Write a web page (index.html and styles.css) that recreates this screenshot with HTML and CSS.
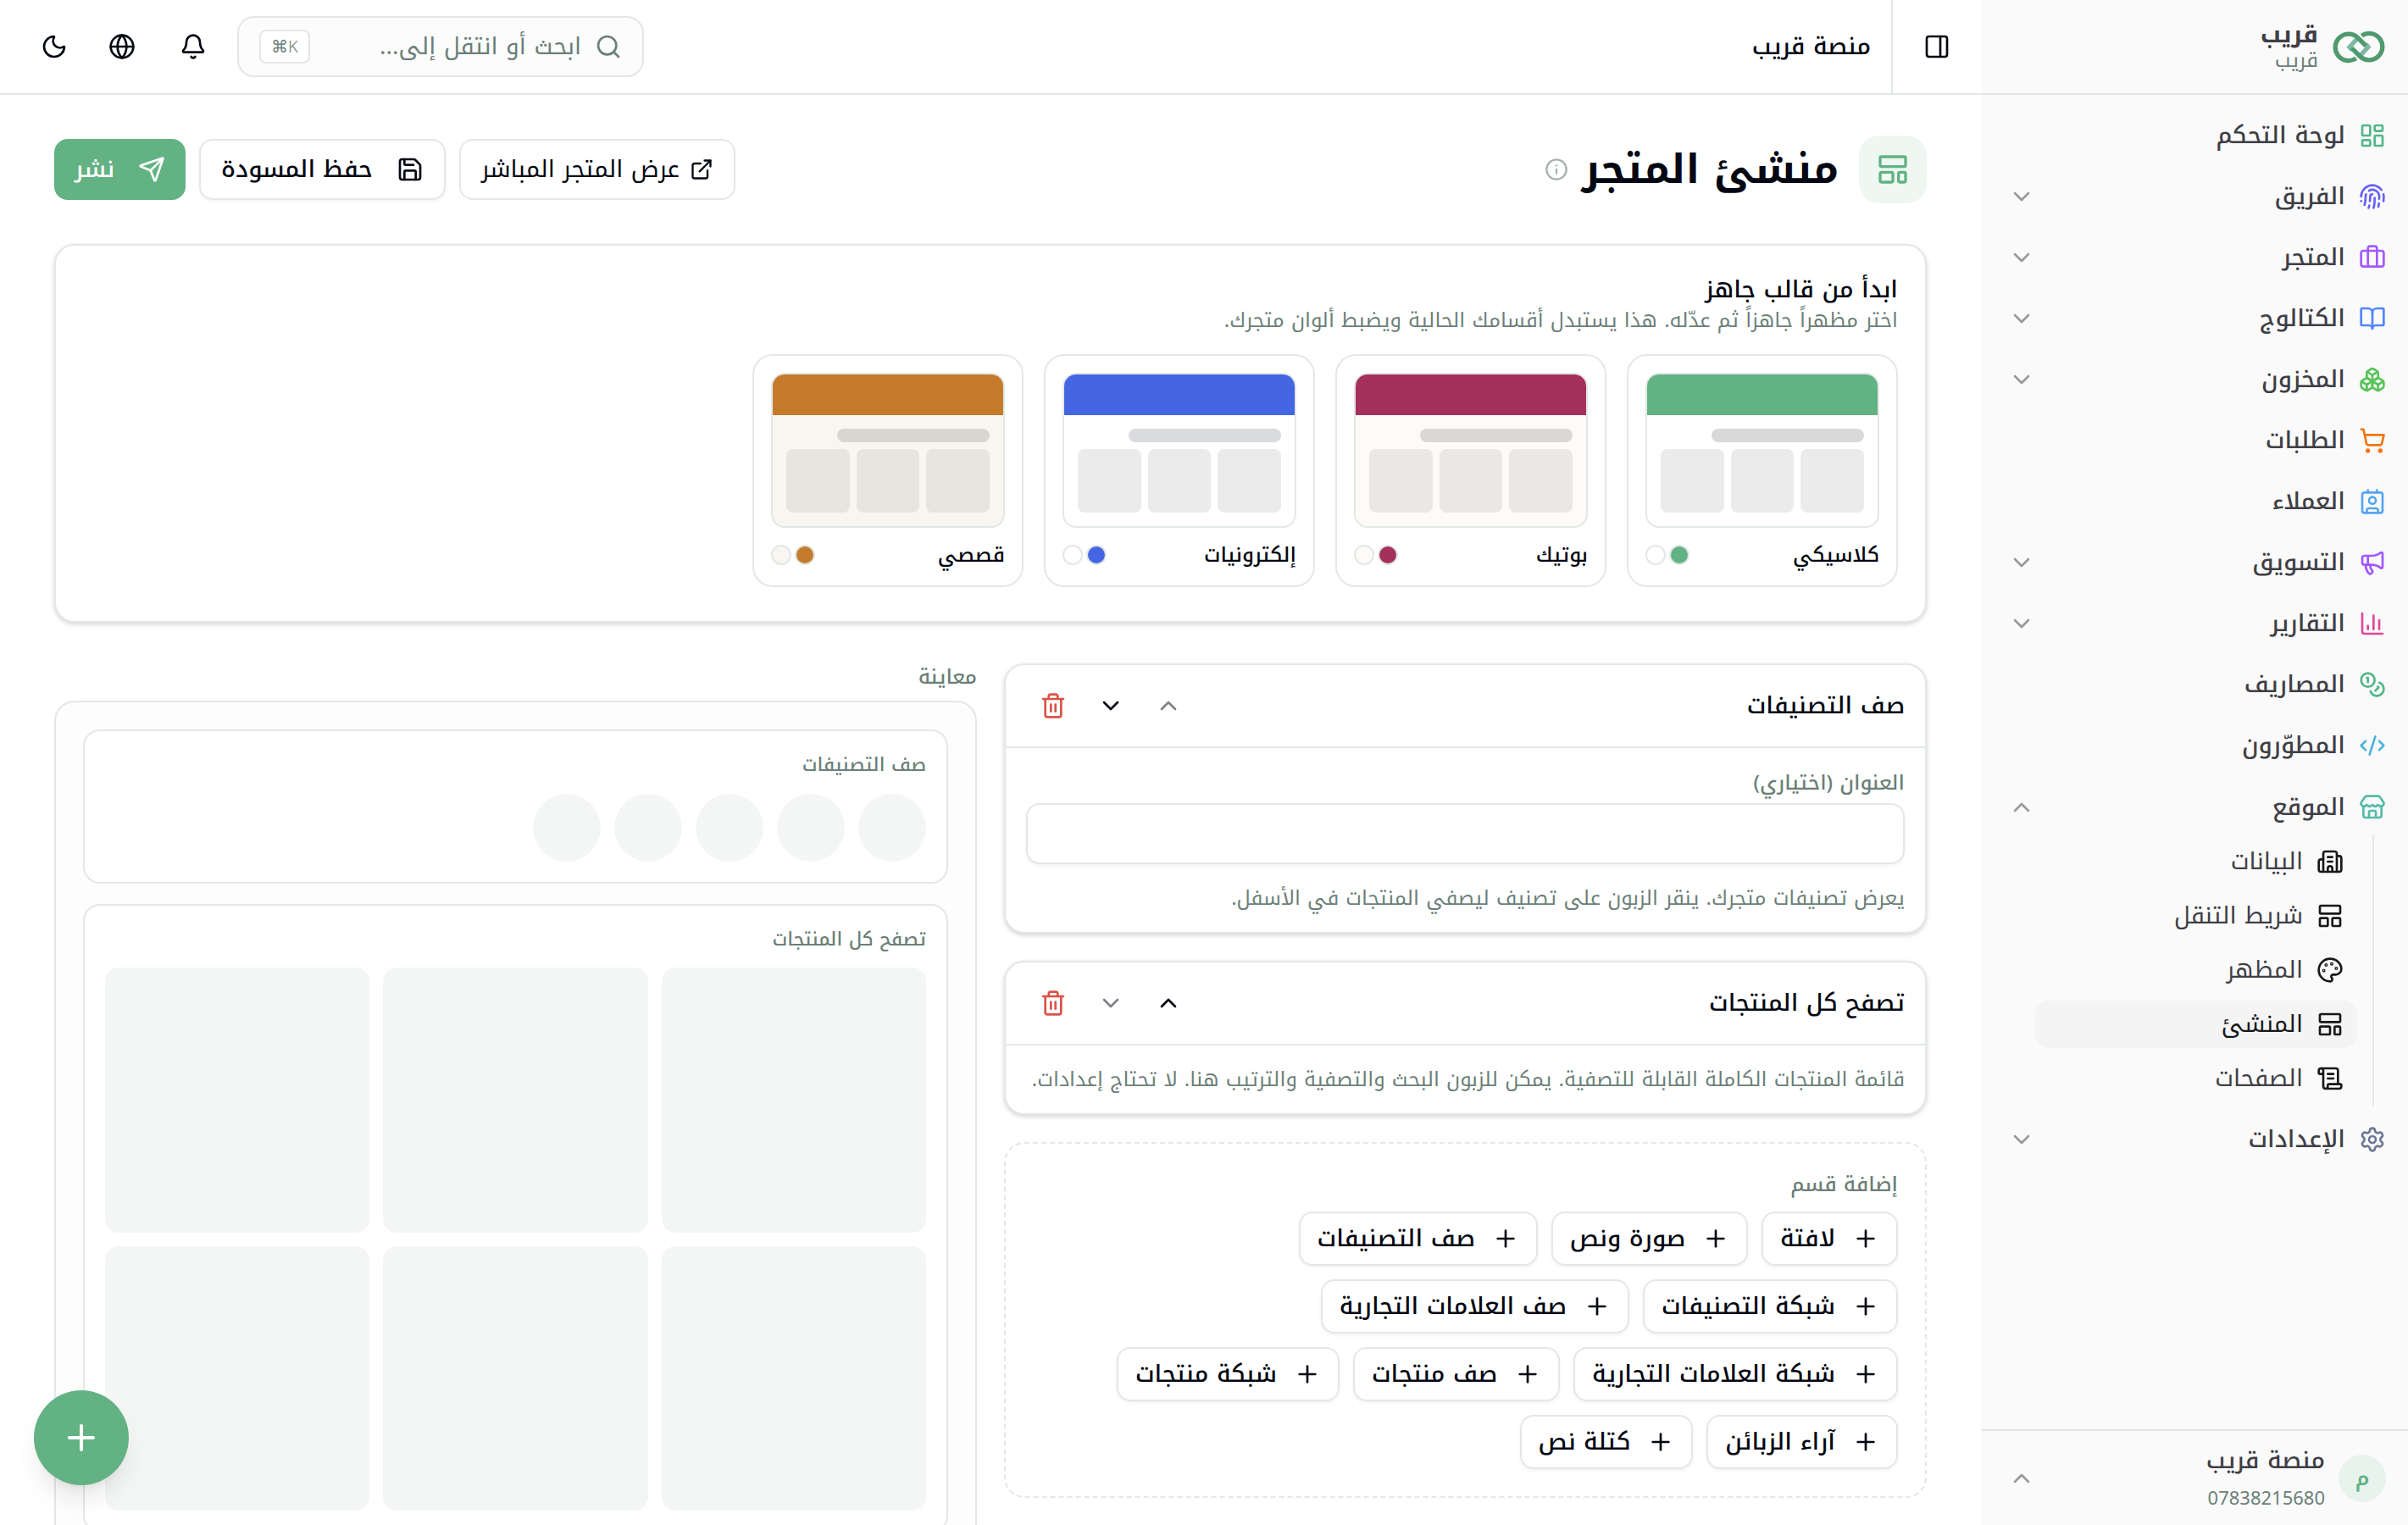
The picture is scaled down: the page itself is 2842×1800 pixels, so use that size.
FILE: index.html
```html
<!DOCTYPE html>
<html lang="ar" dir="rtl">
<head>
    <meta charset="UTF-8">
    <meta name="viewport" content="width=device-width, initial-scale=1.0">
    <title>منشئ المتجر - منصة قريب</title>
    <link rel="stylesheet" href="styles.css">
</head>
<body>

<!-- Icon sprite -->
<svg class="sprite" aria-hidden="true">
    <symbol id="i-dashboard" viewBox="0 0 24 24"><rect width="7" height="9" x="3" y="3" rx="1"/><rect width="7" height="5" x="14" y="3" rx="1"/><rect width="7" height="9" x="14" y="12" rx="1"/><rect width="7" height="5" x="3" y="16" rx="1"/></symbol>
    <symbol id="i-finger" viewBox="0 0 24 24"><path d="M12 10a2 2 0 0 0-2 2c0 1.02-.1 2.51-.26 4"/><path d="M14 13.12c0 2.38 0 6.38-1 8.88"/><path d="M17.29 21.02c.12-.6.43-2.3.5-3.02"/><path d="M2 12a10 10 0 0 1 18-6"/><path d="M2 16h.01"/><path d="M21.8 16c.2-2 .131-5.354 0-6"/><path d="M5 19.5C5.5 18 6 15 6 12a6 6 0 0 1 .34-2"/><path d="M8.65 22c.21-.66.45-1.32.57-2"/><path d="M9 6.8a6 6 0 0 1 9 5.2v2"/></symbol>
    <symbol id="i-case" viewBox="0 0 24 24"><path d="M16 20V4a2 2 0 0 0-2-2h-4a2 2 0 0 0-2 2v16"/><rect width="20" height="14" x="2" y="6" rx="2"/></symbol>
    <symbol id="i-book" viewBox="0 0 24 24"><path d="M12 7v14"/><path d="M3 18a1 1 0 0 1-1-1V4a1 1 0 0 1 1-1h5a4 4 0 0 1 4 4 4 4 0 0 1 4-4h5a1 1 0 0 1 1 1v13a1 1 0 0 1-1 1h-6a3 3 0 0 0-3 3 3 3 0 0 0-3-3z"/></symbol>
    <symbol id="i-boxes" viewBox="0 0 24 24"><path d="M2.97 12.92A2 2 0 0 0 2 14.63v3.24a2 2 0 0 0 .97 1.71l3 1.8a2 2 0 0 0 2.06 0L12 19v-5.5l-5-3-4.03 2.42Z"/><path d="m7 16.5-4.74-2.85"/><path d="m7 16.5 5-3"/><path d="M7 16.5v5.17"/><path d="M12 13.5V19l3.97 2.38a2 2 0 0 0 2.06 0l3-1.8a2 2 0 0 0 .97-1.71v-3.24a2 2 0 0 0-.97-1.71L17 10.5l-5 3Z"/><path d="m17 16.5-5-3"/><path d="m17 16.5 4.74-2.85"/><path d="M17 16.5v5.17"/><path d="M7.97 4.42A2 2 0 0 0 7 6.13v4.37l5 3 5-3V6.13a2 2 0 0 0-.97-1.71l-3-1.8a2 2 0 0 0-2.06 0l-3 1.8Z"/><path d="M12 8 7.26 5.15"/><path d="m12 8 4.74-2.85"/><path d="M12 13.5V8"/></symbol>
    <symbol id="i-cart" viewBox="0 0 24 24"><circle cx="8" cy="21" r="1"/><circle cx="19" cy="21" r="1"/><path d="M2.05 2.05h2l2.66 12.42a2 2 0 0 0 2 1.58h9.78a2 2 0 0 0 1.95-1.57l1.65-7.43H5.12"/></symbol>
    <symbol id="i-contact" viewBox="0 0 24 24"><path d="M16 2v2"/><path d="M7 22v-2a2 2 0 0 1 2-2h6a2 2 0 0 1 2 2v2"/><path d="M8 2v2"/><circle cx="12" cy="11" r="3"/><rect x="3" y="4" width="18" height="18" rx="2"/></symbol>
    <symbol id="i-megaphone" viewBox="0 0 24 24"><path d="M11 6a13 13 0 0 0 8.4-2.8A1 1 0 0 1 21 4v12a1 1 0 0 1-1.6.8A13 13 0 0 0 11 14H5a2 2 0 0 1-2-2V8a2 2 0 0 1 2-2z"/><path d="M6 14a12 12 0 0 0 2.4 7.2 2 2 0 0 0 3.2-2.4A8 8 0 0 1 10 14"/><path d="M8 6v8"/></symbol>
    <symbol id="i-chart" viewBox="0 0 24 24"><path d="M3 3v16a2 2 0 0 0 2 2h16"/><path d="M18 17V9"/><path d="M13 17V5"/><path d="M8 17v-3"/></symbol>
    <symbol id="i-coins" viewBox="0 0 24 24"><circle cx="8" cy="8" r="6"/><path d="M18.09 10.37A6 6 0 1 1 10.34 18"/><path d="M7 6h1v4"/><path d="m16.71 13.88.7.71-2.82 2.82"/></symbol>
    <symbol id="i-code" viewBox="0 0 24 24"><path d="m18 16 4-4-4-4"/><path d="m6 8-4 4 4 4"/><path d="m14.5 4-5 16"/></symbol>
    <symbol id="i-store" viewBox="0 0 24 24"><path d="M15 21v-5a1 1 0 0 0-1-1h-4a1 1 0 0 0-1 1v5"/><path d="M17.774 10.31a1.12 1.12 0 0 0-1.549 0 2.5 2.5 0 0 1-3.451 0 1.12 1.12 0 0 0-1.548 0 2.5 2.5 0 0 1-3.452 0 1.12 1.12 0 0 0-1.549 0 2.5 2.5 0 0 1-3.77-3.248l2.889-4.184A2 2 0 0 1 7 2h10a2 2 0 0 1 1.653.873l2.895 4.192a2.5 2.5 0 0 1-3.774 3.244"/><path d="M4 10.95V19a2 2 0 0 0 2 2h12a2 2 0 0 0 2-2v-8.05"/></symbol>
    <symbol id="i-building" viewBox="0 0 24 24"><path d="M10 12h4"/><path d="M10 8h4"/><path d="M14 21v-3a2 2 0 0 0-4 0v3"/><path d="M6 10H4a2 2 0 0 0-2 2v7a2 2 0 0 0 2 2h16a2 2 0 0 0 2-2V9a2 2 0 0 0-2-2h-2"/><path d="M6 21V5a2 2 0 0 1 2-2h8a2 2 0 0 1 2 2v16"/></symbol>
    <symbol id="i-panel-top" viewBox="0 0 24 24"><rect width="18" height="7" x="3" y="3" rx="1"/><rect width="7" height="7" x="3" y="14" rx="1"/><rect width="7" height="7" x="14" y="14" rx="1"/></symbol>
    <symbol id="i-template" viewBox="0 0 24 24"><rect width="18" height="7" x="3" y="3" rx="1"/><rect width="9" height="7" x="3" y="14" rx="1"/><rect width="5" height="7" x="16" y="14" rx="1"/></symbol>
    <symbol id="i-palette" viewBox="0 0 24 24"><path d="M12 22a1 1 0 0 1 0-20 10 9 0 0 1 10 9 5 5 0 0 1-5 5h-2.25a1.75 1.75 0 0 0-1.4 2.8l.3.4a1.75 1.75 0 0 1-1.4 2.8z"/><circle cx="13.5" cy="6.5" r=".5"/><circle cx="17.5" cy="10.5" r=".5"/><circle cx="6.5" cy="12.5" r=".5"/><circle cx="8.5" cy="7.5" r=".5"/></symbol>
    <symbol id="i-scroll" viewBox="0 0 24 24"><path d="M15 12h-5"/><path d="M15 8h-5"/><path d="M19 17V5a2 2 0 0 0-2-2H4"/><path d="M8 21h12a2 2 0 0 0 2-2v-1a1 1 0 0 0-1-1H11a1 1 0 0 0-1 1v1a2 2 0 1 1-4 0V5a2 2 0 1 0-4 0v2a1 1 0 0 0 1 1h3"/></symbol>
    <symbol id="i-settings" viewBox="0 0 24 24"><path d="M9.671 4.136a2.34 2.34 0 0 1 4.659 0 2.34 2.34 0 0 0 3.319 1.915 2.34 2.34 0 0 1 2.33 4.033 2.34 2.34 0 0 0 0 3.831 2.34 2.34 0 0 1-2.33 4.033 2.34 2.34 0 0 0-3.319 1.915 2.34 2.34 0 0 1-4.659 0 2.34 2.34 0 0 0-3.32-1.915 2.34 2.34 0 0 1-2.33-4.033 2.34 2.34 0 0 0 0-3.831A2.34 2.34 0 0 1 6.35 6.051a2.34 2.34 0 0 0 3.319-1.915"/><circle cx="12" cy="12" r="3"/></symbol>
    <symbol id="i-down" viewBox="0 0 24 24"><path d="m6 9 6 6 6-6"/></symbol>
    <symbol id="i-up" viewBox="0 0 24 24"><path d="m18 15-6-6-6 6"/></symbol>
    <symbol id="i-panel" viewBox="0 0 24 24"><rect width="18" height="18" x="3" y="3" rx="2"/><path d="M15 3v18"/></symbol>
    <symbol id="i-search" viewBox="0 0 24 24"><path d="m21 21-4.34-4.34"/><circle cx="11" cy="11" r="8"/></symbol>
    <symbol id="i-bell" viewBox="0 0 24 24"><path d="M10.268 21a2 2 0 0 0 3.464 0"/><path d="M3.262 15.326A1 1 0 0 0 4 17h16a1 1 0 0 0 .74-1.673C19.41 13.956 18 12.499 18 8A6 6 0 0 0 6 8c0 4.499-1.411 5.956-2.738 7.326"/></symbol>
    <symbol id="i-globe" viewBox="0 0 24 24"><circle cx="12" cy="12" r="10"/><path d="M12 2a14.5 14.5 0 0 0 0 20 14.5 14.5 0 0 0 0-20"/><path d="M2 12h20"/></symbol>
    <symbol id="i-moon" viewBox="0 0 24 24"><path d="M20.985 12.486a9 9 0 1 1-9.473-9.472c.405-.022.617.46.402.803a6 6 0 0 0 8.268 8.268c.344-.215.825-.004.803.401"/></symbol>
    <symbol id="i-info" viewBox="0 0 24 24"><circle cx="12" cy="12" r="10"/><path d="M12 16v-4"/><path d="M12 8h.01"/></symbol>
    <symbol id="i-external" viewBox="0 0 24 24"><path d="M15 3h6v6"/><path d="M10 14 21 3"/><path d="M18 13v6a2 2 0 0 1-2 2H5a2 2 0 0 1-2-2V8a2 2 0 0 1 2-2h6"/></symbol>
    <symbol id="i-save" viewBox="0 0 24 24"><path d="M15.2 3a2 2 0 0 1 1.4.6l3.8 3.8a2 2 0 0 1 .6 1.4V19a2 2 0 0 1-2 2H5a2 2 0 0 1-2-2V5a2 2 0 0 1 2-2z"/><path d="M17 21v-7a1 1 0 0 0-1-1H8a1 1 0 0 0-1 1v7"/><path d="M7 3v4a1 1 0 0 0 1 1h7"/></symbol>
    <symbol id="i-send" viewBox="0 0 24 24"><path d="M14.536 21.686a.5.5 0 0 0 .937-.024l6.5-19a.496.496 0 0 0-.635-.635l-19 6.5a.5.5 0 0 0-.024.937l7.93 3.18a2 2 0 0 1 1.112 1.11z"/><path d="m21.854 2.147-10.94 10.939"/></symbol>
    <symbol id="i-trash" viewBox="0 0 24 24"><path d="M10 11v6"/><path d="M14 11v6"/><path d="M19 6v14a2 2 0 0 1-2 2H7a2 2 0 0 1-2-2V6"/><path d="M3 6h18"/><path d="M8 6V4a2 2 0 0 1 2-2h4a2 2 0 0 1 2 2v2"/></symbol>
    <symbol id="i-plus" viewBox="0 0 24 24"><path d="M5 12h14"/><path d="M12 5v14"/></symbol>
</svg>

<div class="app">

    <!-- Sidebar -->
    <aside class="sidebar">
        <div class="brand">
            <svg class="brand-logo" viewBox="0 0 186 116">
                <path class="logo-light" d="M117 47 126 58 101 85"/>
                <path class="logo-light" d="M69 69 60 58 85 31"/>
                <path class="logo-ring" d="M83 98A47 47 0 1 1 89 25L118 54"/>
                <path class="logo-ring" d="M103 18A47 47 0 1 1 97 91L68 62"/>
            </svg>
            <div class="brand-text">
                <strong>قريب</strong>
                <span>قريب</span>
            </div>
        </div>

        <nav class="nav">
            <a class="nav-item"><svg class="icon c-emerald"><use href="#i-dashboard"/></svg><span>لوحة التحكم</span></a>
            <a class="nav-item"><svg class="icon c-indigo"><use href="#i-finger"/></svg><span>الفريق</span><svg class="icon chevron"><use href="#i-down"/></svg></a>
            <a class="nav-item"><svg class="icon c-purple"><use href="#i-case"/></svg><span>المتجر</span><svg class="icon chevron"><use href="#i-down"/></svg></a>
            <a class="nav-item"><svg class="icon c-blue"><use href="#i-book"/></svg><span>الكتالوج</span><svg class="icon chevron"><use href="#i-down"/></svg></a>
            <a class="nav-item"><svg class="icon c-green"><use href="#i-boxes"/></svg><span>المخزون</span><svg class="icon chevron"><use href="#i-down"/></svg></a>
            <a class="nav-item"><svg class="icon c-orange"><use href="#i-cart"/></svg><span>الطلبات</span></a>
            <a class="nav-item"><svg class="icon c-sky"><use href="#i-contact"/></svg><span>العملاء</span></a>
            <a class="nav-item"><svg class="icon c-purple"><use href="#i-megaphone"/></svg><span>التسويق</span><svg class="icon chevron"><use href="#i-down"/></svg></a>
            <a class="nav-item"><svg class="icon c-pink"><use href="#i-chart"/></svg><span>التقارير</span><svg class="icon chevron"><use href="#i-down"/></svg></a>
            <a class="nav-item"><svg class="icon c-emerald"><use href="#i-coins"/></svg><span>المصاريف</span></a>
            <a class="nav-item"><svg class="icon c-cyan"><use href="#i-code"/></svg><span>المطوّرون</span></a>
            <div class="nav-group">
                <a class="nav-item"><svg class="icon c-teal"><use href="#i-store"/></svg><span>الموقع</span><svg class="icon chevron"><use href="#i-up"/></svg></a>
                <div class="subnav">
                    <a class="sub-item"><svg class="icon"><use href="#i-building"/></svg><span>البيانات</span></a>
                    <a class="sub-item"><svg class="icon"><use href="#i-panel-top"/></svg><span>شريط التنقل</span></a>
                    <a class="sub-item"><svg class="icon"><use href="#i-palette"/></svg><span>المظهر</span></a>
                    <a class="sub-item active"><svg class="icon"><use href="#i-template"/></svg><span>المنشئ</span></a>
                    <a class="sub-item"><svg class="icon"><use href="#i-scroll"/></svg><span>الصفحات</span></a>
                </div>
            </div>
            <a class="nav-item"><svg class="icon c-slate"><use href="#i-settings"/></svg><span>الإعدادات</span><svg class="icon chevron"><use href="#i-down"/></svg></a>
        </nav>

        <div class="account">
            <div class="avatar">م</div>
            <div class="account-text">
                <strong>منصة قريب</strong>
                <span>07838215680</span>
            </div>
            <svg class="icon chevron"><use href="#i-up"/></svg>
        </div>
    </aside>

    <!-- Main -->
    <div class="main">
        <header class="topbar">
            <div class="toggle"><svg class="icon"><use href="#i-panel"/></svg></div>
            <span class="topbar-title">منصة قريب</span>
            <div class="search">
                <svg class="icon"><use href="#i-search"/></svg>
                <span class="search-text">ابحث أو انتقل إلى...</span>
                <kbd dir="ltr">⌘K</kbd>
            </div>
            <div class="topbar-actions">
                <svg class="icon bell"><use href="#i-bell"/></svg>
                <svg class="icon"><use href="#i-globe"/></svg>
                <svg class="icon"><use href="#i-moon"/></svg>
            </div>
        </header>

        <div class="content">
            <div class="page-head">
                <div class="page-icon"><svg class="icon"><use href="#i-template"/></svg></div>
                <h1>منشئ المتجر</h1>
                <svg class="icon info"><use href="#i-info"/></svg>
                <div class="page-actions">
                    <a class="btn btn-view"><svg class="icon"><use href="#i-external"/></svg><span>عرض المتجر المباشر</span></a>
                    <a class="btn btn-save"><svg class="icon"><use href="#i-save"/></svg><span>حفظ المسودة</span></a>
                    <a class="btn btn-publish"><svg class="icon"><use href="#i-send"/></svg><span>نشر</span></a>
                </div>
            </div>

            <!-- Templates -->
            <section class="card templates">
                <h2>ابدأ من قالب جاهز</h2>
                <p>اختر مظهراً جاهزاً ثم عدّله. هذا يستبدل أقسامك الحالية ويضبط ألوان متجرك.</p>
                <div class="template-list">
                    <div class="template classic">
                        <div class="thumb">
                            <div class="thumb-head"></div>
                            <div class="thumb-body"><div class="thumb-bar"></div><div class="thumb-grid"><i></i><i></i><i></i></div></div>
                        </div>
                        <div class="template-foot"><span>كلاسيكي</span><i class="dot primary"></i><i class="dot surface"></i></div>
                    </div>
                    <div class="template boutique">
                        <div class="thumb">
                            <div class="thumb-head"></div>
                            <div class="thumb-body"><div class="thumb-bar"></div><div class="thumb-grid"><i></i><i></i><i></i></div></div>
                        </div>
                        <div class="template-foot"><span>بوتيك</span><i class="dot primary"></i><i class="dot surface"></i></div>
                    </div>
                    <div class="template electronics">
                        <div class="thumb">
                            <div class="thumb-head"></div>
                            <div class="thumb-body"><div class="thumb-bar"></div><div class="thumb-grid"><i></i><i></i><i></i></div></div>
                        </div>
                        <div class="template-foot"><span>إلكترونيات</span><i class="dot primary"></i><i class="dot surface"></i></div>
                    </div>
                    <div class="template story">
                        <div class="thumb">
                            <div class="thumb-head"></div>
                            <div class="thumb-body"><div class="thumb-bar"></div><div class="thumb-grid"><i></i><i></i><i></i></div></div>
                        </div>
                        <div class="template-foot"><span>قصصي</span><i class="dot primary"></i><i class="dot surface"></i></div>
                    </div>
                </div>
            </section>

            <div class="columns">
                <!-- Section editor -->
                <div class="editor">
                    <section class="card">
                        <div class="section-head">
                            <h3>صف التصنيفات</h3>
                            <span class="icon-btn disabled"><svg class="icon"><use href="#i-up"/></svg></span>
                            <span class="icon-btn"><svg class="icon"><use href="#i-down"/></svg></span>
                            <span class="icon-btn danger"><svg class="icon"><use href="#i-trash"/></svg></span>
                        </div>
                        <div class="section-body">
                            <label for="section-title">العنوان (اختياري)</label>
                            <input type="text" id="section-title">
                            <p>يعرض تصنيفات متجرك. ينقر الزبون على تصنيف ليصفي المنتجات في الأسفل.</p>
                        </div>
                    </section>
                    <section class="card">
                        <div class="section-head">
                            <h3>تصفح كل المنتجات</h3>
                            <span class="icon-btn"><svg class="icon"><use href="#i-up"/></svg></span>
                            <span class="icon-btn disabled"><svg class="icon"><use href="#i-down"/></svg></span>
                            <span class="icon-btn danger"><svg class="icon"><use href="#i-trash"/></svg></span>
                        </div>
                        <div class="section-body">
                            <p>قائمة المنتجات الكاملة القابلة للتصفية. يمكن للزبون البحث والتصفية والترتيب هنا. لا تحتاج إعدادات.</p>
                        </div>
                    </section>
                    <section class="add-box">
                        <div class="add-label">إضافة قسم</div>
                        <div class="add-list">
                            <a class="add-btn"><svg class="icon"><use href="#i-plus"/></svg><span>لافتة</span></a>
                            <a class="add-btn"><svg class="icon"><use href="#i-plus"/></svg><span>صورة ونص</span></a>
                            <a class="add-btn"><svg class="icon"><use href="#i-plus"/></svg><span>صف التصنيفات</span></a>
                        </div>
                        <div class="add-list">
                            <a class="add-btn"><svg class="icon"><use href="#i-plus"/></svg><span>شبكة التصنيفات</span></a>
                            <a class="add-btn"><svg class="icon"><use href="#i-plus"/></svg><span>صف العلامات التجارية</span></a>
                        </div>
                        <div class="add-list">
                            <a class="add-btn"><svg class="icon"><use href="#i-plus"/></svg><span>شبكة العلامات التجارية</span></a>
                            <a class="add-btn"><svg class="icon"><use href="#i-plus"/></svg><span>صف منتجات</span></a>
                            <a class="add-btn"><svg class="icon"><use href="#i-plus"/></svg><span>شبكة منتجات</span></a>
                        </div>
                        <div class="add-list">
                            <a class="add-btn"><svg class="icon"><use href="#i-plus"/></svg><span>آراء الزبائن</span></a>
                            <a class="add-btn"><svg class="icon"><use href="#i-plus"/></svg><span>كتلة نص</span></a>
                        </div>
                    </section>
                </div>

                <!-- Preview -->
                <div class="preview">
                    <div class="preview-label">معاينة</div>
                    <div class="preview-panel">
                        <div class="preview-card">
                            <h4>صف التصنيفات</h4>
                            <div class="circles"><i></i><i></i><i></i><i></i><i></i></div>
                        </div>
                        <div class="preview-card">
                            <h4>تصفح كل المنتجات</h4>
                            <div class="tiles"><i></i><i></i><i></i><i></i><i></i><i></i></div>
                        </div>
                    </div>
                </div>
            </div>
        </div>
    </div>
</div>

<a class="fab"><svg class="icon"><use href="#i-plus"/></svg></a>

</body>
</html>
```
FILE: styles.css
```css
* {
    box-sizing: border-box;
}
body {
    margin: 0;
    height: 1800px;
    overflow: hidden;
    font-family: "Noto Kufi Arabic", "Noto Sans", sans-serif;
    font-size: 28px;
    line-height: 40px;
    color: #030712;
    background: #fff;
}
h1, h2, h3, h4, p {
    margin: 0;
}
.sprite {
    display: none;
}
.icon {
    width: 32px;
    height: 32px;
    flex: none;
    fill: none;
    stroke: currentColor;
    stroke-width: 2;
    stroke-linecap: round;
    stroke-linejoin: round;
}
.app {
    display: flex;
    height: 1800px;
}

/* Sidebar */
.sidebar {
    width: 504px;
    flex: none;
    display: flex;
    flex-direction: column;
    background: #fafafa;
    color: #3f3f46;
}
.brand {
    height: 112px;
    flex: none;
    display: flex;
    align-items: center;
    gap: 17px;
    padding: 0 27px;
    border-bottom: 2px solid #e2e8e6;
}
.brand-logo {
    width: 62px;
    height: 39px;
    direction: ltr;
}
.brand-logo path {
    fill: none;
    stroke-width: 16;
}
.logo-ring {
    stroke: #4f9a6e;
}
.logo-light {
    stroke: #7cb8a4;
}
.brand-text, .account-text {
    display: flex;
    flex-direction: column;
}
.brand-text strong {
    font-size: 28px;
    line-height: 32px;
}
.brand-text span {
    font-size: 24px;
    line-height: 28px;
    color: #6b7f78;
}
.nav {
    flex: 1;
    display: flex;
    flex-direction: column;
    gap: 8px;
    padding: 16px 16px 0;
}
.nav-item {
    height: 64px;
    display: flex;
    align-items: center;
    gap: 16px;
    padding: 0 10px 0 16px;
    font-weight: 500;
}
.nav-item span {
    flex: 1;
}
.chevron {
    color: #9a9a9e;
}
.nav-group {
    margin-top: 1px;
}
.subnav {
    display: flex;
    flex-direction: column;
    gap: 8px;
    margin-right: 24px;
    margin-left: 48px;
    padding: 4px 18px 4px 0;
    border-right: 2px solid #e2e8e6;
}
.sub-item {
    height: 56px;
    display: flex;
    align-items: center;
    gap: 16px;
    padding: 0 16px;
    border-radius: 16px;
}
.sub-item .icon {
    color: #18181b;
}
.sub-item.active {
    background: #f4f4f5;
    color: #18181b;
}
.account {
    height: 113px;
    flex: none;
    display: flex;
    align-items: center;
    gap: 16px;
    padding: 0 26px 0 32px;
    border-top: 2px solid #e2e8e6;
}
.account-text {
    flex: 1;
    padding-top: 6px;
}
.account-text strong {
    font-weight: 500;
    line-height: 42px;
}
.account-text span {
    font-size: 22px;
    line-height: 48px;
    color: #6b7f78;
}
.avatar {
    width: 56px;
    height: 56px;
    border-radius: 50%;
    background: #e9f3ee;
    color: #62b283;
    font-size: 24px;
    font-weight: 600;
    line-height: 56px;
    text-align: center;
}
.c-emerald { color: #52b788; }
.c-indigo { color: #6661f6; }
.c-purple { color: #a259ff; }
.c-blue { color: #5086ff; }
.c-green { color: #5ac35a; }
.c-orange { color: #f07613; }
.c-sky { color: #55a6f2; }
.c-pink { color: #e0489a; }
.c-cyan { color: #4bb2de; }
.c-teal { color: #55baa8; }
.c-slate { color: #6b7894; }

/* Topbar */
.main {
    flex: 1;
    min-width: 0;
}
.topbar {
    height: 112px;
    display: flex;
    align-items: center;
    border-bottom: 2px solid #e2e8e6;
}
.toggle {
    height: 110px;
    width: 106px;
    display: flex;
    align-items: center;
    justify-content: center;
    border-left: 2px solid #e2e8e6;
}
.topbar-title {
    flex: 1;
    padding-right: 24px;
    font-weight: 500;
}
.search {
    width: 480px;
    height: 72px;
    display: flex;
    align-items: center;
    gap: 16px;
    padding: 0 24px;
    border: 2px solid #e2e8e6;
    border-radius: 20px;
    background: #fcfcfc;
    color: #6b7f78;
}
.search-text {
    flex: 1;
}
kbd {
    width: 60px;
    height: 40px;
    border: 2px solid #e2e8e6;
    border-radius: 8px;
    background: #fff;
    font-family: "Noto Sans", sans-serif;
    font-size: 20px;
    font-weight: 300;
    line-height: 36px;
    text-align: center;
}
.topbar-actions {
    display: flex;
    gap: 48px;
    padding: 0 36px 0 48px;
}
.topbar-actions .bell {
    margin-left: 4px;
}

/* Page head */
.content {
    padding: 48px 64px 0;
}
.page-head {
    height: 80px;
    display: flex;
    align-items: center;
}
.page-icon {
    width: 80px;
    height: 80px;
    display: flex;
    align-items: center;
    justify-content: center;
    border-radius: 24px;
    background: #eef7f2;
    color: #62b283;
}
.page-icon .icon {
    width: 40px;
    height: 40px;
}
h1 {
    margin-right: 24px;
    font-size: 48px;
    font-weight: 700;
    line-height: 64px;
}
.info {
    width: 28px;
    height: 28px;
    margin-right: 16px;
    color: #a6b2ae;
}
.page-actions {
    flex: 1;
    display: flex;
    justify-content: flex-end;
    gap: 16px;
}
.btn {
    height: 72px;
    display: flex;
    align-items: center;
    gap: 28px;
    padding: 0 24px;
    border: 2px solid #e2e8e6;
    border-radius: 16px;
    font-weight: 500;
    white-space: nowrap;
}
.btn-view {
    gap: 12px;
    font-weight: 400;
}
.btn-view .icon {
    width: 28px;
    height: 28px;
}
.btn-save {
    box-shadow: 0 2px 4px rgba(0, 0, 0, 0.05);
}
.btn-publish {
    border: none;
    background: #62b283;
    color: #fff;
}

/* Cards */
.card {
    border: 2px solid #e2e8e6;
    border-radius: 24px;
    background: #fff;
    box-shadow: 0 2px 6px rgba(0, 0, 0, 0.1), 0 2px 4px rgba(0, 0, 0, 0.08);
}
.templates {
    height: 447px;
    margin-top: 48px;
    padding: 34px 32px 32px;
}
.templates h2 {
    font-size: 28px;
    font-weight: 500;
    line-height: 36px;
}
.templates p {
    font-size: 24px;
    line-height: 36px;
    color: #6b7f78;
}
.template-list {
    display: flex;
    gap: 24px;
    margin-top: 22px;
}
.template {
    width: 320px;
    padding: 20px;
    border: 2px solid #e2e8e6;
    border-radius: 24px;
}
.thumb {
    border: 2px solid #e2e8e6;
    border-radius: 16px;
    background: var(--surface);
    overflow: hidden;
}
.thumb-head {
    height: 48px;
    background: var(--primary);
}
.thumb-body {
    padding: 16px;
}
.thumb-bar {
    width: 75%;
    height: 16px;
    border-radius: 8px;
    background: var(--bar);
}
.thumb-grid {
    display: grid;
    grid-template-columns: repeat(3, 1fr);
    gap: 8px;
    margin-top: 8px;
}
.thumb-grid i {
    aspect-ratio: 1;
    border-radius: 8px;
    background: var(--tile);
}
.template-foot {
    height: 32px;
    display: flex;
    align-items: center;
    gap: 4px;
    margin-top: 16px;
    font-size: 24px;
    font-weight: 500;
}
.template-foot span {
    flex: 1;
}
.dot {
    width: 24px;
    height: 24px;
    border: 2px solid #e2e8e6;
    border-radius: 50%;
}
.dot.primary { background: var(--primary); }
.dot.surface { background: var(--surface); }
.classic { --primary: #62b283; --surface: #fff; --bar: #d9d9d9; --tile: #ebebeb; }
.boutique { --primary: #a4305b; --surface: #fefaf7; --bar: #dbd7d4; --tile: #ebe7e4; }
.electronics { --primary: #4466e3; --surface: #fff; --bar: #dadbdd; --tile: #ebebeb; }
.story { --primary: #c47c2c; --surface: #f8f6f1; --bar: #d9d5d0; --tile: #e6e5e0; }

/* Columns */
.columns {
    display: grid;
    grid-template-columns: 1fr 1fr;
    gap: 32px;
    margin-top: 48px;
}
.editor {
    display: flex;
    flex-direction: column;
    gap: 32px;
}
.section-head {
    height: 98px;
    display: flex;
    align-items: center;
    gap: 4px;
    padding: 0 24px;
    border-bottom: 2px solid #e2e8e6;
}
.section-head h3 {
    flex: 1;
    font-size: 28px;
    font-weight: 500;
}
.icon-btn {
    width: 64px;
    height: 64px;
    display: flex;
    align-items: center;
    justify-content: center;
}
.icon-btn.disabled {
    opacity: 0.5;
}
.icon-btn.danger {
    color: #d9534a;
}
.section-body {
    padding: 24px;
    font-size: 24px;
    line-height: 32px;
    color: #6b7f78;
}
.section-body label {
    display: block;
    margin-bottom: 7px;
    font-weight: 500;
    line-height: 34px;
}
.section-body input {
    display: block;
    width: 100%;
    height: 72px;
    margin-bottom: 24px;
    border: 2px solid #e2e8e6;
    border-radius: 16px;
    background: #fff;
    box-shadow: 0 2px 4px rgba(0, 0, 0, 0.05);
}
.add-box {
    display: flex;
    flex-direction: column;
    gap: 16px;
    padding: 32px;
    border: 2px dashed #e2e8e6;
    border-radius: 24px;
}
.add-label {
    font-size: 24px;
    font-weight: 500;
    line-height: 32px;
    color: #6b7f78;
}
.add-list {
    display: flex;
    gap: 16px;
}
.add-btn {
    height: 64px;
    display: flex;
    align-items: center;
    gap: 20px;
    padding: 0 20px;
    border: 2px solid #e2e8e6;
    border-radius: 16px;
    font-weight: 500;
    white-space: nowrap;
    box-shadow: 0 2px 4px rgba(0, 0, 0, 0.05);
}

/* Preview */
.preview-label {
    height: 44px;
    font-size: 24px;
    font-weight: 500;
    line-height: 32px;
    color: #6b7f78;
}
.preview-panel {
    display: flex;
    flex-direction: column;
    gap: 24px;
    padding: 32px;
    border: 2px solid #e2e8e6;
    border-radius: 24px;
    background: #fdfdfd;
}
.preview-card {
    padding: 24px;
    border: 2px solid #e2e8e6;
    border-radius: 20px;
    background: #fff;
}
.preview-card h4 {
    margin-bottom: 16px;
    font-size: 22px;
    font-weight: 500;
    line-height: 33.7px;
    color: #6b7f78;
}
.circles {
    display: flex;
    gap: 16px;
}
.circles i {
    width: 80px;
    height: 80px;
    border-radius: 50%;
    background: #f4f6f5;
}
.tiles {
    display: grid;
    grid-template-columns: repeat(3, 1fr);
    gap: 16px;
}
.tiles i {
    aspect-ratio: 1;
    border-radius: 16px;
    background: #f4f6f5;
}

/* Floating button */
.fab {
    position: fixed;
    left: 40px;
    bottom: 47px;
    width: 112px;
    height: 112px;
    display: flex;
    align-items: center;
    justify-content: center;
    border-radius: 50%;
    background: #62b283;
    color: #fff;
    box-shadow: 0 20px 30px -6px rgba(0, 0, 0, 0.1), 0 8px 12px -8px rgba(0, 0, 0, 0.1);
}
.fab .icon {
    width: 48px;
    height: 48px;
}
```
